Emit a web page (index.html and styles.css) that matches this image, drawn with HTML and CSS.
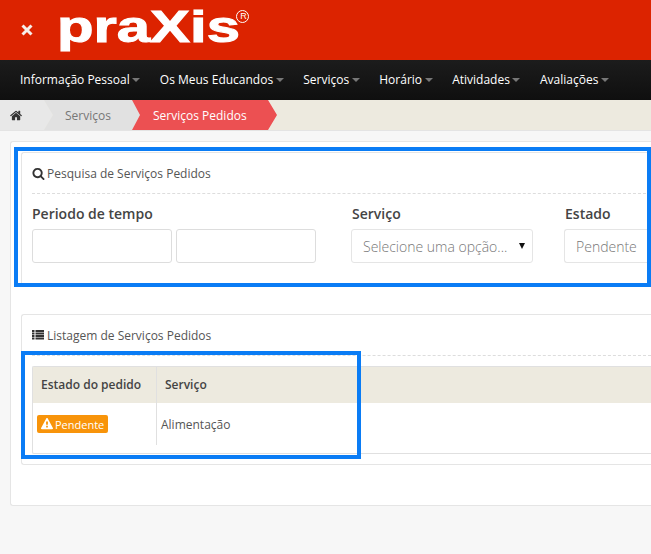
FILE: index.html
```html
<!DOCTYPE html>
<html lang="en">
<head>
  <meta charset="UTF-8">
  <title>praXis</title>
  <link rel="stylesheet" href="styles.css">
</head>
<body>
  <!-- Header -->
  <header class="topbar">
    <svg class="close-icon" viewBox="0 0 14 14"><path d="M2.500 2.500l9 9M11.500 2.500l-9 9"/></svg>
    <div class="logo"><span class="logo-text">praXis</span><span class="logo-mark">R</span></div>
  </header>

  <!-- Menu -->
  <nav class="menu">
    <a>Informação Pessoal<i class="caret"></i></a>
    <a>Os Meus Educandos<i class="caret"></i></a>
    <a>Serviços<i class="caret"></i></a>
    <a>Horário<i class="caret"></i></a>
    <a>Atividades<i class="caret"></i></a>
    <a>Avaliações<i class="caret"></i></a>
  </nav>

  <!-- Breadcrumb -->
  <div class="crumbs">
    <div class="crumb crumb-home">
      <svg class="icon" viewBox="0 0 1792 1792"><path d="M1408 992v480q0 26-19 45t-45 19h-384v-384h-256v384h-384q-26 0-45-19t-19-45v-480q0-1 .5-3t.5-3l575-474 575 474q1 2 1 6zm223-69l-62 74q-8 9-21 11h-3q-13 0-21-7l-692-577-692 577q-12 8-24 7-13-2-21-11l-62-74q-8-10-7-23.500t11-21.500l719-599q32-26 76-26t76 26l244 204v-195q0-14 9-23t23-9h192q14 0 23 9t9 23v408l219 182q10 8 11 21.500t-7 23.500z"/></svg>
    </div>
    <div class="crumb crumb-link">Serviços</div>
    <div class="crumb crumb-active">Serviços Pedidos</div>
  </div>

  <main class="content">
    <div class="page-box">
      <!-- Search -->
      <section class="panel panel-search">
        <h2 class="panel-title">
          <svg class="icon" viewBox="0 0 1792 1792"><path d="M1216 832q0-185-131.500-316.500t-316.500-131.500-316.500 131.500-131.500 316.500 131.500 316.500 316.500 131.500 316.500-131.500 131.500-316.500zm512 832q0 52-38 90t-90 38q-54 0-90-38l-343-342q-179 124-399 124-143 0-273.500-55.500t-225-150-150-225-55.500-273.500 55.500-273.500 150-225 225-150 273.500-55.500 273.500 55.500 225 150 150 225 55.500 273.500q0 220-124 399l343 343q37 37 37 90z"/></svg>
          Pesquisa de Serviços Pedidos
        </h2>
        <div class="filters">
          <div class="field field-dates">
            <label>Periodo de tempo</label>
            <div class="date-inputs">
              <div class="input"></div>
              <div class="input"></div>
            </div>
          </div>
          <div class="field field-service">
            <label>Serviço</label>
            <div class="input select">Selecione uma opção...<i class="select-arrow"></i></div>
          </div>
          <div class="field field-state">
            <label>Estado</label>
            <div class="input select">Pendente</div>
          </div>
        </div>
      </section>

      <!-- List -->
      <section class="panel panel-list">
        <h2 class="panel-title">
          <svg class="icon icon-list" viewBox="0 0 12 10"><path d="M0 0h2.500v2H0zM3.500 0H12v2H3.500zM0 2.500h2.500v2H0zM3.500 2.500H12v2H3.500zM0 5h2.500v2H0zM3.500 5H12v2H3.500zM0 7.500h2.500v2H0zM3.500 7.500H12v2H3.500z"/></svg>
          Listagem de Serviços Pedidos
        </h2>
        <div class="table-box">
          <table class="orders">
            <thead>
              <tr>
                <th class="col-state">Estado do pedido</th>
                <th>Serviço</th>
              </tr>
            </thead>
            <tbody>
              <tr>
                <td class="col-state">
                  <span class="badge">
                    <svg viewBox="0 0 1792 1792"><path d="M1024 1375v-190q0-14-9.500-23.500t-22.500-9.500h-192q-13 0-22.500 9.500t-9.500 23.500v190q0 14 9.500 23.500t22.500 9.500h192q13 0 22.500-9.500t9.500-23.500zm-2-374l18-459q0-12-10-19-13-11-24-11h-220q-11 0-24 11-10 7-10 21l17 457q0 10 10 16.500t24 6.500h185q14 0 23.500-6.500t10.500-16.500zm-14-934l768 1408q35 63-2 126-17 29-46.500 46t-63.500 17h-1536q-34 0-63.500-17t-46.500-46q-37-63-2-126l768-1408q17-31 47-49t65-18 65 18 47 49z"/></svg>
                    Pendente
                  </span>
                </td>
                <td>Alimentação</td>
              </tr>
            </tbody>
          </table>
        </div>
      </section>
    </div>
  </main>

  <!-- Highlight boxes drawn over the page -->
  <div class="highlight highlight-search"></div>
  <div class="highlight highlight-table"></div>
</body>
</html>
```

FILE: styles.css
```css
/* Global Styles */
* {
  margin: 0;
  padding: 0;
  box-sizing: border-box;
}

html, body {
  height: 100%;
  overflow: hidden;
}

body {
  position: relative;
  font-family: 'Open Sans', sans-serif;
  font-size: 12px;
  background-color: #f7f7f7;
  color: #444;
}

.icon {
  width: 13px;
  height: 13px;
  fill: #333;
  flex: none;
}

/* Header */
.topbar {
  height: 60px;
  background-color: #dc2300;
  display: flex;
  align-items: flex-start;
  padding-left: 20px;
}

.close-icon {
  width: 14px;
  height: 14px;
  margin-top: 23px;
  fill: none;
  stroke: #f6eeea;
  stroke-width: 3;
  flex: none;
}

.logo {
  display: flex;
  width: 195px;
  margin-top: 5px;
  margin-left: 23px;
  color: #fff;
}

.logo-text {
  display: block;
  width: 179px;
  font-family: 'Liberation Sans', sans-serif;
  font-size: 44px;
  font-weight: 700;
  line-height: 44px;
  -webkit-text-stroke: 1px #fff;
  transform: scaleX(1.36);
  transform-origin: left center;
}

.logo-mark {
  width: 13px;
  height: 13px;
  padding-left: 2px;
  border: 1px solid #fff;
  border-radius: 50%;
  font-family: 'Liberation Sans', sans-serif;
  font-size: 9px;
  line-height: 11px;
  text-align: center;
  margin-top: 5px;
}

/* Menu */
.menu {
  height: 40px;
  padding-bottom: 2px;
  background: linear-gradient(#1c1c1c, #0f0f0f);
  display: flex;
  align-items: center;
  gap: 19.6px;
  padding-left: 20px;
  color: #fff;
  font-size: 12px;
  white-space: nowrap;
}

.menu a {
  display: flex;
  align-items: center;
}

.caret {
  width: 0;
  height: 0;
  margin-left: 2.5px;
  margin-top: 1px;
  border-left: 4px solid transparent;
  border-right: 4px solid transparent;
  border-top: 4px solid #777;
}

/* Breadcrumb */
.crumbs {
  height: 31px;
  background-color: #edeadf;
  border-bottom: 1px solid #e4e4e4;
  display: flex;
}

.crumb {
  height: 30px;
  display: flex;
  align-items: center;
  flex: none;
}

.crumb-home {
  width: 53px;
  padding-left: 10px;
  background-color: #e8e8e8;
  clip-path: polygon(0 0, 44px 0, 53px 15px, 44px 30px, 0 30px);
}

.crumb-link {
  width: 97px;
  margin-left: -9px;
  padding-left: 21px;
  background-color: #e1e1e1;
  color: #777;
  clip-path: polygon(0 0, 88px 0, 97px 15px, 88px 30px, 0 30px, 9px 15px);
}

.crumb-active {
  width: 145px;
  margin-left: -9px;
  padding-left: 21px;
  background-color: #ec5052;
  color: #fff;
  clip-path: polygon(0 0, 136px 0, 145px 15px, 136px 30px, 0 30px, 8px 15px);
}

/* Content */
.content {
  padding: 10px 0 0 10px;
}

.page-box {
  height: 365px;
  background-color: #fff;
  border: 1px solid #e5e5e5;
  border-right: 0;
  border-radius: 3px 0 0 3px;
  padding: 10px 0 0 10px;
}

.panel {
  background-color: #fff;
  border: 1px solid #e5e5e5;
  border-right: 0;
  border-radius: 3px 0 0 3px;
  padding: 0 0 0 10px;
}

.panel-title {
  display: flex;
  align-items: center;
  gap: 2px;
  height: 41px;
  font-size: 12px;
  font-weight: 400;
  color: #555;
  border-bottom: 1px dashed #ddd;
}

.panel-search {
  height: 134px;
}

.panel-list {
  height: 151px;
  margin-top: 28px;
}

.icon-list {
  width: 12px;
  height: 10px;
  margin-right: 1px;
}

/* Filters */
.filters {
  display: flex;
  padding-top: 10px;
}

label {
  display: block;
  font-size: 14px;
  font-weight: 600;
  line-height: 19px;
  margin-bottom: 6px;
}

.date-inputs {
  display: flex;
  gap: 4px;
}

.input {
  height: 34px;
  width: 140px;
  background-color: #fff;
  border: 1px solid #ddd;
  border-radius: 3px;
}

.field-service {
  margin-left: 35px;
}

.field-state {
  flex: 1;
  margin-left: 31px;
}

.field-service label,
.field-state label {
  padding-left: 1px;
}

.select {
  display: flex;
  align-items: center;
  padding-left: 11px;
  font-size: 14px;
  font-weight: 300;
  color: #777;
  border-color: #e5e5e5;
  white-space: nowrap;
}

.field-service .select {
  width: 182px;
  position: relative;
}

.field-state .select {
  width: 100%;
  border-right: 0;
  border-radius: 3px 0 0 3px;
}

.select-arrow {
  position: absolute;
  right: 7px;
  top: 13px;
  width: 0;
  height: 0;
  border-left: 3px solid transparent;
  border-right: 3px solid transparent;
  border-top: 6px solid #111;
}

/* Table */
.table-box {
  margin-top: 10px;
  padding-bottom: 8px;
  border: 1px solid #e0e0e0;
  border-right: 0;
  border-radius: 2px 0 0 2px;
}

.orders {
  width: 100%;
  border-collapse: separate;
  border-spacing: 0;
}

.orders th {
  height: 36px;
  padding: 0 0 2px 8px;
  background-color: #edeadf;
  font-size: 12px;
  font-weight: 600;
  text-align: left;
  color: #444;
}

.orders td {
  height: 42px;
  padding: 0 0 0 4px;
  font-size: 12px;
  color: #555;
  vertical-align: middle;
}

.col-state {
  width: 124px;
  border-right: 1px solid #e0e0e0;
}

.badge {
  display: inline-flex;
  align-items: center;
  gap: 2px;
  height: 18px;
  padding: 0 4px;
  background-color: #f8940a;
  border-radius: 2px;
  color: #fff;
  font-size: 11px;
  white-space: nowrap;
  vertical-align: middle;
}

.badge svg {
  width: 12px;
  height: 12px;
  fill: #fff;
}

/* Highlight boxes */
.highlight {
  position: absolute;
  border: 4px solid #0a7cf5;
  pointer-events: none;
}

.highlight-search {
  left: 14px;
  top: 147px;
  width: 637px;
  height: 140px;
}

.highlight-table {
  left: 21px;
  top: 351px;
  width: 340px;
  height: 108px;
}
```
